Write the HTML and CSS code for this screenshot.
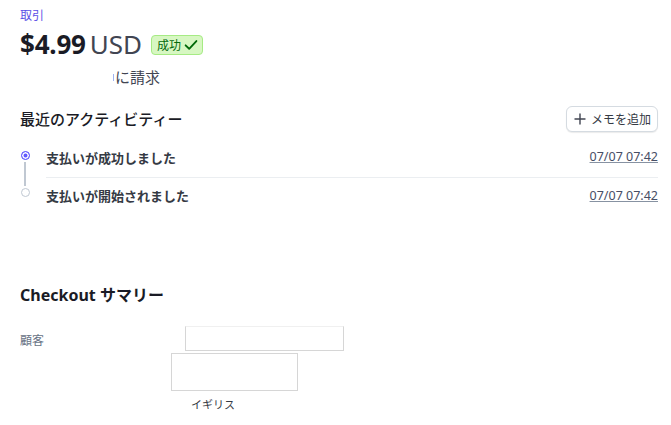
FILE: index.html
```html
<!DOCTYPE html>
<html lang="ja">
<head>
    <meta charset="UTF-8">
    <meta name="viewport" content="width=device-width, initial-scale=1.0">
    <title>取引</title>
    <link rel="stylesheet" href="styles.css">
</head>
<body>
    <div class="page">
        <div class="header">
            <div class="crumb">取引</div>
            <div class="amount-row">
                <span class="amount">$4.99</span>
                <span class="currency">USD</span>
                <span class="badge">成功
                    <svg width="14" height="12" viewBox="0 0 13 11"><path d="M1.5 5.8 L4.8 9 L11.5 1.8" fill="none" stroke="#006908" stroke-width="1.7" stroke-linecap="round" stroke-linejoin="round"/></svg>
                </span>
            </div>
            <div class="charged"><span class="redact-mark"></span>に請求</div>
        </div>

        <div class="section-head">
            <h2 class="section-title">最近のアクティビティー</h2>
            <button class="note-button">
                <svg width="12" height="12" viewBox="0 0 12 12"><path d="M6 1 V11 M1 6 H11" stroke="#414552" stroke-width="1.4" stroke-linecap="round"/></svg>
                メモを追加
            </button>
        </div>

        <div class="timeline">
            <div class="event first">
                <div class="marker"><span class="dot active"></span></div>
                <div class="event-body">
                    <span class="event-text">支払いが成功しました</span>
                    <a href="#" class="event-date">07/07 07:42</a>
                </div>
            </div>
            <div class="event">
                <div class="marker"><span class="dot"></span></div>
                <div class="event-body last">
                    <span class="event-text">支払いが開始されました</span>
                    <a href="#" class="event-date">07/07 07:42</a>
                </div>
            </div>
        </div>

        <h2 class="summary-title">Checkout サマリー</h2>
        <div class="summary-row">
            <div class="summary-label">顧客</div>
            <div class="summary-value">
                <span class="blank blank-wide"></span>
                <span class="blank blank-tall"></span>
                <span class="country">イギリス</span>
            </div>
        </div>
    </div>
</body>
</html>
```

FILE: styles.css
```css
body {
    margin: 0;
    background-color: #ffffff;
    font-family: "Noto Sans", "Noto Sans CJK JP", sans-serif;
    color: #1a1b25;
}
.page {
    padding: 6px 13px 0 20px;
}
.crumb {
    font-size: 12px;
    line-height: 20px;
    color: #5b4ee6;
}
.amount-row {
    display: flex;
    align-items: center;
    margin-top: 1px;
    height: 34px;
}
.amount {
    font-size: 26px;
    font-weight: 700;
    letter-spacing: -0.2px;
    color: #1a1b25;
}
.currency {
    font-size: 26px;
    color: #414552;
    margin-left: 4px;
}
.badge {
    display: flex;
    align-items: center;
    gap: 3px;
    margin-left: 9px;
    margin-top: 1px;
    height: 18px;
    padding: 0 4px 0 5px;
    font-size: 12px;
    color: #05690d;
    background-color: #d7f7c2;
    border: 1px solid #a6eb84;
    border-radius: 4px;
}
.charged {
    display: flex;
    align-items: center;
    margin-left: 93px;
    margin-top: 5px;
    font-size: 15px;
    line-height: 22px;
    color: #414552;
}
.redact-mark {
    width: 1px;
    height: 7px;
    background-color: #9fb3f0;
    margin-right: 1px;
}

/* Recent activity */
.section-head {
    display: flex;
    justify-content: space-between;
    align-items: center;
    margin-top: 16px;
}
.section-title {
    margin: 0;
    font-size: 15px;
    font-weight: 500;
    color: #1a1b25;
}
.note-button {
    display: flex;
    align-items: center;
    gap: 5px;
    height: 26px;
    margin-top: 2px;
    padding: 0 6px 0 7px;
    font-family: inherit;
    font-size: 12px;
    color: #353a44;
    background-color: #ffffff;
    border: 1px solid #d5dbe1;
    border-radius: 6px;
    box-shadow: 0 1px 1px rgba(0, 0, 0, 0.08);
}
.timeline {
    margin-top: 10px;
}
.event {
    display: flex;
}
.marker {
    position: relative;
    width: 26px;
    display: flex;
    justify-content: center;
    padding-top: 9px;
    margin-left: -8px;
}
.event.first .marker::after {
    content: "";
    position: absolute;
    left: 12px;
    top: 20px;
    bottom: -8px;
    width: 2px;
    background-color: #c0c8d2;
}
.dot {
    width: 7px;
    height: 7px;
    border-radius: 50%;
    border: 1.5px solid #c0c8d2;
    background-color: #ffffff;
    box-sizing: content-box;
}
.dot.active {
    border-color: #635bff;
    background-color: #635bff;
    box-shadow: inset 0 0 0 1.5px #ffffff;
}
.event-body {
    flex: 1;
    display: flex;
    justify-content: space-between;
    align-items: center;
    height: 36px;
    margin-left: 8px;
    border-bottom: 1px solid #ebeef1;
}
.event-body.last {
    border-bottom: none;
    height: 34px;
}
.event-text {
    font-size: 13px;
    font-weight: 700;
    color: #353a44;
}
.event-date {
    font-size: 12.5px;
    color: #474e65;
    text-decoration: underline;
    text-decoration-color: #8792a2;
}
.event:first-child .event-body {
    align-items: flex-start;
    padding-top: 6px;
    height: 29px;
}
.event:last-child .marker {
    padding-top: 10px;
}

/* Checkout summary */
.summary-title {
    margin: 70px 0 0 0;
    font-size: 16px;
    font-weight: 700;
}
.summary-row {
    display: flex;
    margin-top: 20px;
}
.summary-label {
    width: 151px;
    font-size: 12px;
    color: #687385;
    padding-top: 5px;
}
.summary-value {
    display: flex;
    flex-direction: column;
    align-items: flex-start;
}
.blank {
    display: block;
    border: 1px solid #d6d6d6;
    background-color: #ffffff;
}
.blank-wide {
    width: 157px;
    height: 23px;
    margin-left: 14px;
    border-top-color: #f0f0f0;
}
.blank-tall {
    width: 125px;
    height: 36px;
    margin-top: 2px;
}
.country {
    font-size: 11px;
    color: #353a44;
    margin-left: 20px;
    margin-top: 5px;
}
```
